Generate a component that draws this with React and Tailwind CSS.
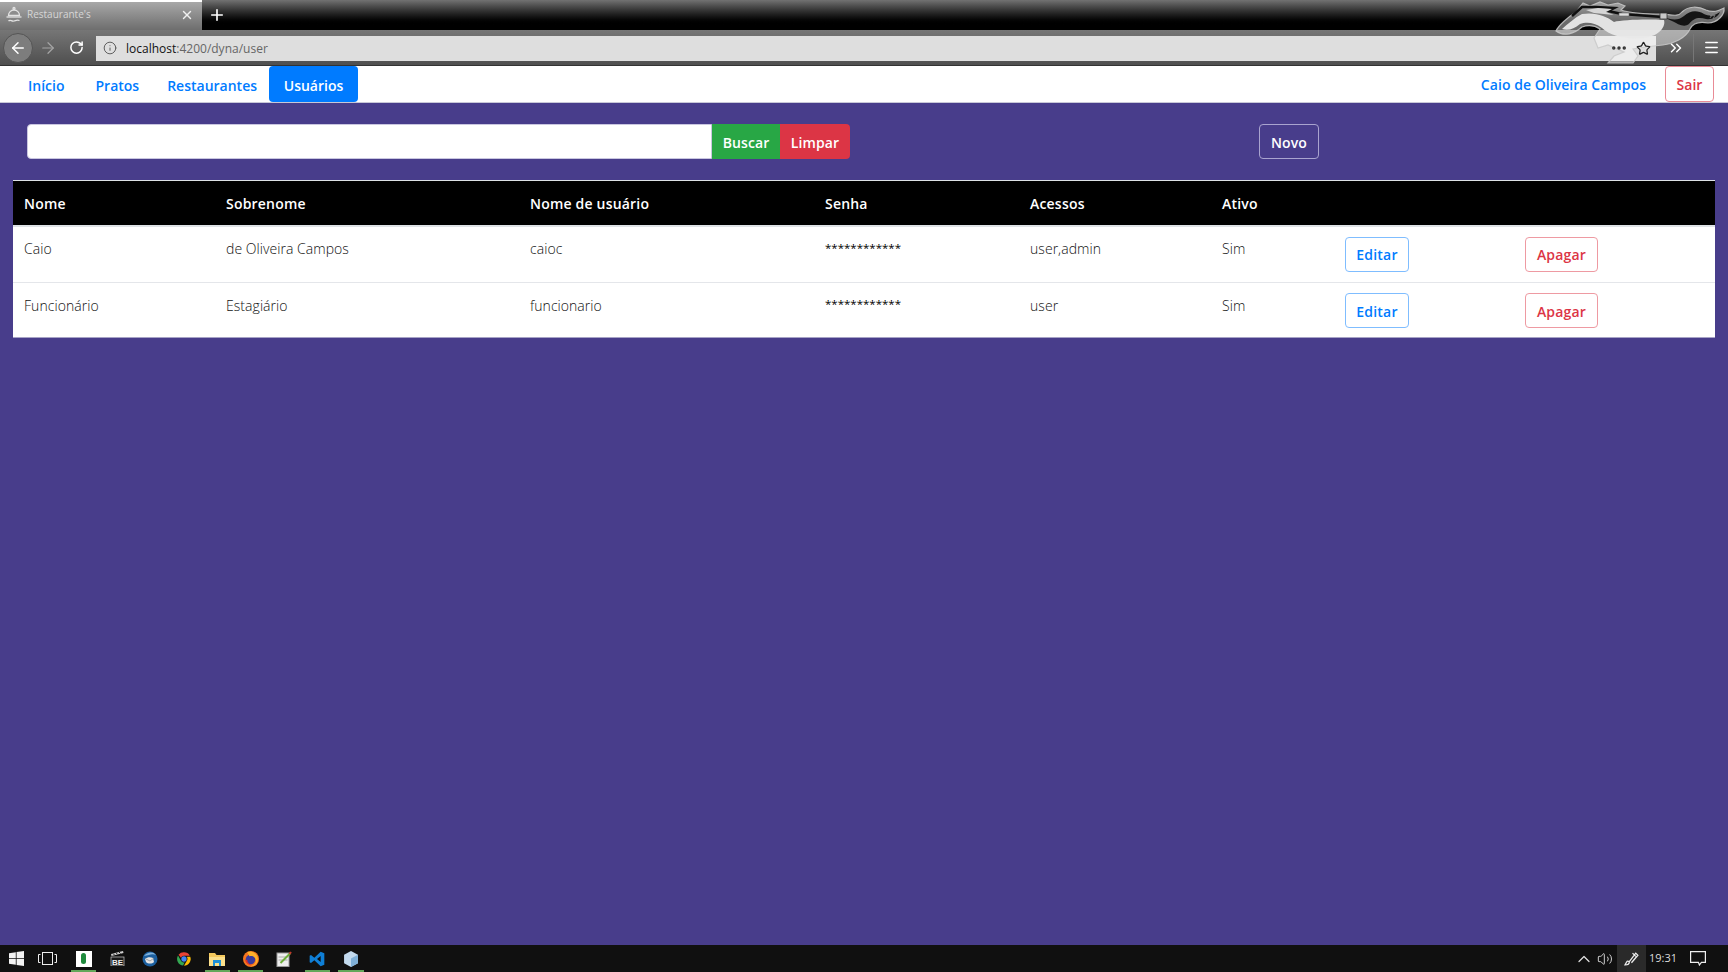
import React from 'react';
import { ArrowLeft, ArrowRight, RotateCw, Info, Star, ChevronsRight, Menu, X, Plus, Ellipsis, ChevronUp, Volume2 } from 'lucide-react';

const COLS = ['w-[202px]', 'w-[304px]', 'w-[295px]', 'w-[205px]', 'w-[192px]', 'w-[123px]', 'w-[180px]', 'w-[201px]'];
const HEADERS = ['Nome', 'Sobrenome', 'Nome de usuário', 'Senha', 'Acessos', 'Ativo', '', ''];
const USERS = [
  ['Caio', 'de Oliveira Campos', 'caioc', '************', 'user,admin', 'Sim'],
  ['Funcionário', 'Estagiário', 'funcionario', '************', 'user', 'Sim'],
];

const Cloche = () => (
  <svg width="18" height="18" viewBox="0 0 18 18" fill="none" stroke="#e2e2e2" strokeWidth="1.3">
    <circle cx="9" cy="2.500" r="1" />
    <path d="M3.500 9.500a5.500 5.500 0 0 1 11 0z" fill="#8d8d8d" />
    <path d="M1.500 11h15" />
    <path d="M3.500 15c2-2 3 .8 5.500 0s3-1.500 5.500-.5" />
  </svg>
);

// the pony of the browser theme, hangs over the title bar and the toolbar
const Mustang = () => (
  <svg className="absolute right-0 top-0 pointer-events-none" width="180" height="66" viewBox="0 0 180 66">
    <path
      d="M8 31 C10 26 20 17 28 12 L35 3 L42 6 L52 2 L60 5 L70 3 L77 6 L73 10 C82 13 92 14 115 14 C125 15 130 17 134 12 C140 6 150 6 158 10 C165 13 170 11 176 8 C177 14 170 23 160 23 C150 21 145 23 142 29 C138 38 125 44 115 45 C105 46 95 47 85 49 L90 56 L85 63 L60 63 L66 56 L76 52 L60 45 L50 48 L46 38 L52 29 C46 25 40 25 34 27 C26 34 16 37 8 31 Z"
      fill="#ffffff"
      fillOpacity="0.42"
      stroke="#c9c9c9"
      strokeOpacity="0.85"
      strokeWidth="1.2"
    />
    <path d="M14 29 C20 24 26 18 34 14 C48 12 58 16 66 22 C74 20 96 19 116 20 C118 26 112 36 96 38 C80 40 62 36 54 28 C46 22 38 22 32 24 C26 29 20 31 14 29 Z" fill="#e9e9e9" fillOpacity="0.95" />
    <path d="M24 16 L34 7 L48 7 L66 8 L60 11 L74 14 L115 17" fill="none" stroke="#101010" strokeWidth="2.600" />
    <path d="M38 10 L50 8 L64 9 L58 12 L66 15 L46 13 Z" fill="#d6d6d6" />
    <path d="M115 17 C124 20 130 21 136 16 C142 10 150 10 156 14 C163 17 168 15 172 12 C170 17 164 20 158 19 C150 17 146 18 141 24 C136 28 130 24 124 21 Z" fill="#141414" />
    <rect x="112" y="13" width="7" height="6" fill="#c8c8c8" stroke="#333" strokeWidth="0.8" />
    <rect x="71" y="13" width="10" height="3" fill="#dedede" stroke="#666" strokeWidth="0.6" />
    <path d="M160 13 l3 3 l4 -1 l-2 4 M162 18 l3 -5" stroke="#888" strokeWidth="0.8" fill="none" />
  </svg>
);

const Windows = () => (
  <svg width="15" height="15" viewBox="0 0 15 15" fill="#f2f2f2">
    <path d="M0 2.200 6.800 1.200V7H0zM7.600 1.100 15 0v7H7.600zM0 7.800h6.800v5.900L0 12.800zM7.600 7.800H15V15l-7.400-1.100z" />
  </svg>
);

const TaskItem = ({ active, children }) => (
  <div className="relative flex h-full w-[33.4px] shrink-0 items-center justify-center">
    {children}
    {active && <div className="absolute bottom-0 left-1 right-1 h-[2px] bg-[#63a75a]" />}
  </div>
);

const Browser = () => (
  <div className="relative shrink-0 h-[66px] flex flex-col bg-[#5a5a5a]">
    <div className="h-[30px] flex bg-gradient-to-b from-[#727272] to-black to-85%">
      <div className="w-[202px] flex items-center pl-[5px] pr-[8px] gap-[3px] pb-[3px] border-t-2 border-white bg-gradient-to-b from-[#a8a8a8] to-[#6e6e6e]">
        <Cloche />
        <span className="flex-1 ml-[1px] text-[10px] text-[#d6d6d6]">Restaurante's</span>
        <X size={14} strokeWidth={2.4} color="#f0f0f0" />
      </div>
      <div className="w-[30px] flex items-center justify-center">
        <Plus size={18} strokeWidth={2.2} color="#fff" />
      </div>
    </div>
    <div className="flex-1 flex items-center bg-gradient-to-b from-[#767676] to-[#4f4f4f] border-b border-[#333]">
      <div className="ml-[3px] w-[30px] h-[30px] rounded-full bg-[#7d7d7d] border border-[#555] flex items-center justify-center">
        <ArrowLeft size={18} strokeWidth={2} color="#fff" />
      </div>
      <div className="w-[29px] flex justify-center">
        <ArrowRight size={18} strokeWidth={1.6} color="#a5a5a5" />
      </div>
      <div className="w-[29px] flex justify-center">
        <RotateCw size={15} strokeWidth={2.4} color="#fff" />
      </div>
      <div className="ml-[5px] mt-px w-[1560px] h-[25px] bg-[#dedede] flex items-center">
        <Info size={14} strokeWidth={1.600} color="#555" className="ml-[7px]" />
        <span className="ml-[9px] pt-[2px] text-[12px] text-[#111]">localhost<span className="text-[#666]">:4200/dyna/user</span></span>
        <Ellipsis size={18} strokeWidth={2.600} color="#333" className="relative z-10 ml-auto mr-[8px]" />
        <Star size={15} strokeWidth={2} color="#222" className="relative z-10 mr-[5px]" />
      </div>
      <ChevronsRight size={18} strokeWidth={2} color="#fff" className="relative z-10 ml-[11px]" />
      <div className="ml-[8px] w-px h-[28px] bg-[#777]" />
      <Menu size={17} strokeWidth={2.200} color="#fff" className="ml-[9px]" />
    </div>
    <Mustang />
  </div>
);

const Navbar = () => (
  <nav className="shrink-0 h-[37px] bg-white border-b border-[#c8c8d8] flex items-stretch pl-[13px] pr-[14px] text-[14px] font-semibold text-[#007bff]">
    <a className="px-[15px] pt-[2px] flex items-center">Início</a>
    <a className="pl-[16px] pr-[13px] pt-[2px] flex items-center">Pratos</a>
    <a className="pl-[15px] pr-[12px] pt-[2px] flex items-center">Restaurantes</a>
    <a className="w-[89px] pt-[2px] flex items-center justify-center rounded-[4px] bg-[#007bff] text-white">Usuários</a>
    <a className="ml-auto mr-[19px] pt-[1px] flex items-center tracking-[0.05px]">Caio de Oliveira Campos</a>
    <button className="w-[49px] rounded-[4px] border border-[#e98b96] text-[#dc3545] font-semibold">Sair</button>
  </nav>
);

const SearchBar = () => (
  <div className="flex pl-[27px] pt-[21px] h-[77px] text-[14px] font-semibold tracking-[0.1px]">
    <input className="w-[685px] h-[35px] rounded-l-[4px] bg-white border border-[#c9c6e0] outline-none" />
    <button className="w-[68px] h-[35px] pt-px bg-[#28a745] text-white">Buscar</button>
    <button className="w-[70px] h-[35px] pt-px rounded-r-[4px] bg-[#dc3545] text-white">Limpar</button>
    <button className="ml-[409px] w-[60px] h-[35px] pt-px rounded-[4px] border border-[#a9a4cf] text-white">Novo</button>
  </div>
);

const UsersTable = () => (
  <div className="mx-[13px]">
    <table className="w-[1702px] table-fixed border-collapse bg-white text-[14px] text-[#111]">
      <colgroup>
        {COLS.map((c, i) => <col key={i} className={c} />)}
      </colgroup>
      <thead>
        <tr className="h-[45px] bg-black text-white border-t border-[#dee2e6] border-b-2">
          {HEADERS.map((h, i) => (
            <th key={i} className="px-[11px] pt-[2px] text-left font-semibold tracking-[0.2px]">{h}</th>
          ))}
        </tr>
      </thead>
      <tbody>
        {USERS.map((u, r) => (
          <tr key={r} className={r === 0 ? 'h-[57px] border-b border-[#e4e6ea]' : 'h-[55px] border-b border-[#a7a3c6]'}>
            {u.map((v, i) => {
              if (i === 3) {
                return <td key={i} className="px-[11px] align-top pt-[10px] leading-[21px] text-[11.500px] text-black">{v}</td>;
              }
              return (
                <td key={i} className={r === 0 ? 'px-[11px] align-top pt-[11px] font-light tracking-[0.05px]' : 'px-[11px] align-top pt-[12px] font-light tracking-[0.05px]'}>
                  {v}
                </td>
              );
            })}
            <td className="px-[11px] align-top pt-[10px]">
              <button className="block w-[64px] h-[35px] pt-px rounded-[4px] border border-[#7fbdff] text-[#007bff] font-semibold tracking-[0.2px]">Editar</button>
            </td>
            <td className="px-[11px] align-top pt-[10px]">
              <button className="block w-[73px] h-[35px] pt-px rounded-[4px] border border-[#ee9aa2] text-[#dc3545] font-semibold tracking-[0.2px]">Apagar</button>
            </td>
          </tr>
        ))}
      </tbody>
    </table>
  </div>
);

const Taskbar = () => (
  <div className="shrink-0 h-[27px] bg-[#101010] flex items-center text-white">
    <div className="w-[32px] flex justify-center"><Windows /></div>
    <div className="w-[30px] flex justify-center">
      <svg width="19" height="13" viewBox="0 0 19 13" fill="none" stroke="#eee">
        <rect x="4.500" y="0.500" width="10" height="12" />
        <path d="M2.500 2.500H.5v8h2M16.500 2.500h2v8h-2" />
      </svg>
    </div>
    <div className="flex h-full ml-[5px]">
      <TaskItem active>
        <div className="w-[16px] h-[16px] bg-white flex items-center justify-center"><div className="w-[5px] h-[11px] rounded-full bg-[#1f8a3c]" /></div>
      </TaskItem>
      <TaskItem>
        <svg width="15" height="15" viewBox="0 0 15 15"><path d="M1 3l12-3 .5 2-12 3z" fill="#ccc" /><path d="M3 2.500l1.500 1.500M6 1.800l1.500 1.500M9 1l1.500 1.500" stroke="#222" /><rect x="1" y="6" width="13" height="9" fill="#1a1a1a" stroke="#ccc" strokeWidth="0.7" /><text x="7.500" y="13.500" textAnchor="middle" fontSize="8" fontWeight="700" fill="#eee" fontFamily="Liberation Sans">BE</text></svg>
      </TaskItem>
      <TaskItem>
        <svg width="16" height="16" viewBox="0 0 16 16"><circle cx="8" cy="8" r="7.500" fill="#1c5f9e" /><path d="M2 5c3-4 9-5 12-1-2-1-5-1-7 0z" fill="#7fb2dc" /><path d="M3 8c2-2 6-2 8-1l1 4c-2 2-6 2-8 0z" fill="#e4e4e4" /><path d="M4 8l4 2 4-3" stroke="#8a8a8a" fill="none" strokeWidth="0.7" /></svg>
      </TaskItem>
      <TaskItem>
        <svg width="16" height="16" viewBox="0 0 24 24">
          <path d="M12 2a10 10 0 0 1 8.700 5H12a5 5 0 0 0-4.600 3L3.800 5.600A10 10 0 0 1 12 2z" fill="#ea4335" />
          <path d="M21.400 8.500A10 10 0 0 1 12 22l4.300-7.500a5 5 0 0 0-.3-6z" fill="#fbbc05" />
          <path d="M10.700 21.900A10 10 0 0 1 3 6.900l4.300 7.400a5 5 0 0 0 5.600 2.600z" fill="#34a853" />
          <circle cx="12" cy="12" r="4" fill="#4285f4" />
        </svg>
      </TaskItem>
      <TaskItem active>
        <svg width="16" height="14" viewBox="0 0 16 14"><path d="M0 1h6l1.500 2H16v11H0z" fill="#f4c95d" /><path d="M0 5h16v9H0z" fill="#fbe08c" /><path d="M4 8h8v6h-2v-3H6v3H4z" fill="#1e90d6" /></svg>
      </TaskItem>
      <TaskItem active>
        <svg width="16" height="16" viewBox="0 0 15 15"><circle cx="7.500" cy="7.500" r="7.500" fill="#f5751e" /><circle cx="7" cy="8" r="4.500" fill="#3a3a9c" /><path d="M4 1c5-2 10 2 10 7 0 4-4 7-7 6 3 0 5-2 5-5S9 4 6 5z" fill="#fdb22b" /><path d="M2 9c1 3 4 5 7 4-3 0-5-2-5-5z" fill="#e0312a" /></svg>
      </TaskItem>
      <TaskItem>
        <svg width="16" height="16" viewBox="0 0 15 16"><rect x="0.500" y="2" width="12" height="13.500" fill="#eee" stroke="#999" /><path d="M2 6h9M2 9h9" stroke="#aaa" /><path d="M4 12l3-3 7-7" stroke="#6dae3a" strokeWidth="2" /><path d="M13 3l1.500-2" stroke="#c0392b" strokeWidth="2" /></svg>
      </TaskItem>
      <TaskItem active>
        <svg width="16" height="16" viewBox="0 0 24 24" fill="#0f7fd6"><path d="M17.500 1 23 3.500v17L17.500 23 8 14l-5 4-2-1V7l2-1 5 4zm0 6.500L12 12l5.500 4.500z" /></svg>
      </TaskItem>
      <TaskItem active>
        <svg width="14" height="16" viewBox="0 0 13 15"><path d="M6.500 0 13 3.500v8L6.500 15 0 11.500v-8z" fill="#c3daee" /><path d="M6.500 7 13 3.500v8L6.500 15z" fill="#7fb0d8" /></svg>
      </TaskItem>
    </div>
    <div className="ml-auto flex items-center h-full">
      <ChevronUp size={20} strokeWidth={1.500} color="#ddd" />
      <Volume2 size={16} strokeWidth={1.400} color="#ddd" className="ml-[3px]" />
      <div className="ml-[4px] w-[29px] h-full bg-[#2a2a2a] flex items-center justify-center">
        <svg width="16" height="16" viewBox="0 0 15 15" fill="none" stroke="#eee" strokeWidth="1.200"><path d="M1 13c2-4 2-4 4-3 0 2-2 3-4 3zM5 10l6-8 2 2-6 7M8 2l3 3" /></svg>
      </div>
      <span className="w-[34px] text-center text-[11px] text-[#ddd]">19:31</span>
      <svg className="ml-[10px] mr-[22px]" width="16" height="15" viewBox="0 0 16 15" fill="none" stroke="#eee" strokeWidth="1.200"><path d="M.6.6h14.800v10.800h-4l-2 2.600-1-2.600H.6z" /></svg>
    </div>
  </div>
);

export default function App() {
  return (
    <div className="h-[972px] w-[1728px] overflow-hidden flex flex-col bg-[#483d8b] font-['Open_Sans',sans-serif]">
      <Browser />
      <Navbar />
      <main className="flex-1">
        <SearchBar />
        <UsersTable />
      </main>
      <Taskbar />
    </div>
  );
}
